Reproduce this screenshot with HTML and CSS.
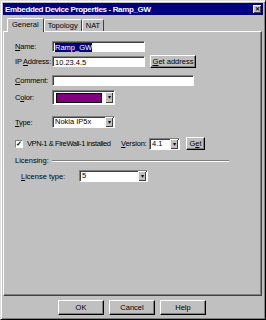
FILE: index.html
```html
<!DOCTYPE html>
<html lang="en">
<head>
  <meta charset="UTF-8" />
  <title>Embedded Device Properties - Ramp_GW</title>
  <link rel="stylesheet" href="styles.css">
</head>
<body>

<div class="window">
  <div class="titlebar">
    <span class="title">Embedded Device Properties - Ramp_GW</span>
    <span class="close">&#x2715;</span>
  </div>

  <div class="tabs">
    <div class="tab active">General</div>
    <div class="tab">Topology</div>
    <div class="tab">NAT</div>
  </div>

  <div class="panel">
    <div class="row row-name">
      <label class="lbl"><u>N</u>ame:</label>
      <div class="field w92"><span class="sel">Ramp_GW</span></div>
    </div>
    <div class="row row-ip">
      <label class="lbl">IP <u>A</u>ddress:</label>
      <div class="field w92">10.23.4.5</div>
      <button class="btn btn-get"><u>G</u>et address</button>
    </div>
    <div class="row row-comment">
      <label class="lbl"><u>C</u>omment:</label>
      <div class="field w141"></div>
    </div>
    <div class="row row-color">
      <label class="lbl">C<u>o</u>lor:</label>
      <div class="combo combo-color">
        <div class="swatch"></div>
        <div class="arrow">&#9662;</div>
      </div>
    </div>
    <div class="row row-type">
      <label class="lbl"><u>T</u>ype:</label>
      <div class="combo w62">
        <span class="val">Nokia IP5x</span>
        <div class="arrow">&#9662;</div>
      </div>
    </div>
    <div class="row row-vpn">
      <div class="check">&#10003;</div>
      <span class="vpn-text">VPN-1 &amp; FireWall-1 installed</span>
      <label class="ver-lbl"><u>V</u>ersion:</label>
      <div class="combo w30">
        <span class="val">4.1</span>
        <div class="arrow">&#9662;</div>
      </div>
      <button class="btn btn-small">G<u>e</u>t</button>
    </div>
    <div class="group">
      <span class="group-lbl">Licensing:</span>
      <div class="group-line"></div>
    </div>
    <div class="row row-license">
      <label class="lbl-lic"><u>L</u>icense type:</label>
      <div class="combo w68">
        <span class="val">5</span>
        <div class="arrow">&#9662;</div>
      </div>
    </div>
  </div>

  <div class="footer">
    <button class="btn btn-foot">OK</button>
    <button class="btn btn-foot">Cancel</button>
    <button class="btn btn-foot">Help</button>
  </div>
</div>

</body>
</html>
```

FILE: styles.css
```css
body {
  margin: 0;
  padding: 0;
  background: #c0c0c0;
  font-family: 'Liberation Sans', Arial, sans-serif;
  font-size: 7.5px;
  color: #000;
}

.window {
  width: 266px;
  height: 320px;
  box-sizing: border-box;
  background: #c0c0c0;
  border: 1px solid;
  border-color: #dfdfdf #000 #000 #dfdfdf;
  box-shadow: inset 1px 1px 0 #fff, inset -1px -1px 0 #808080;
  padding: 2px;
  display: flex;
  flex-direction: column;
}

.titlebar {
  height: 12px;
  background: #000080;
  color: #fff;
  display: flex;
  align-items: center;
  justify-content: space-between;
  padding: 0 2px 0 2px;
}

.title {
  font-weight: 700;
  font-size: 8px;
  letter-spacing: -0.35px;
}

.close {
  width: 8px;
  height: 8px;
  background: #c0c0c0;
  color: #000;
  font-size: 6px;
  line-height: 8px;
  text-align: center;
  font-weight: bold;
  box-shadow: inset 1px 1px 0 #fff, inset -1px -1px 0 #404040;
}

.tabs {
  display: flex;
  margin-top: 3px;
  padding-left: 6px;
  height: 13px;
  align-items: flex-end;
}

.tab {
  height: 11px;
  line-height: 11px;
  padding: 0 3px;
  border: 1px solid;
  border-color: #fff #404040 transparent #fff;
  border-bottom: none;
  border-radius: 2px 2px 0 0;
}

.tab.active {
  height: 13px;
  line-height: 12px;
  margin-left: -2px;
  padding: 0 4px 0 4px;
  position: relative;
  z-index: 1;
  background: #c0c0c0;
  margin-bottom: -1px;
}

.panel {
  height: 265px;
  box-sizing: border-box;
  border: 1px solid;
  border-color: #fff #404040 #404040 #fff;
  box-shadow: inset -1px -1px 0 #808080;
  margin-right: 1px;
  padding: 9px 0 0 11px;
}

.row {
  display: flex;
  align-items: center;
}

.row-ip { margin-top: 3px; }
.row-comment { margin-top: 7px; }
.row-color { margin-top: 4px; }
.row-type { margin-top: 11px; }
.row-vpn { margin-top: 9px; }
.row-license { margin-top: 5px; padding-left: 6px; }

.lbl {
  width: 37px;
  white-space: nowrap;
  letter-spacing: -0.2px;
}

.lbl-lic {
  width: 58px;
}

.field {
  height: 11px;
  line-height: 11px;
  box-sizing: border-box;
  background: #fff;
  border: 1px solid;
  border-color: #808080 #fff #fff #808080;
  box-shadow: inset 1px 1px 0 #404040;
  padding-left: 2px;
  white-space: nowrap;
}

.w92 { width: 93px; }
.w141 { width: 142px; }
.w62 { width: 63px; }
.w30 { width: 31px; }
.w68 { width: 69px; }

.sel {
  background: #000080;
  color: #fff;
}

.combo {
  height: 12px;
  box-sizing: border-box;
  background: #fff;
  border: 1px solid;
  border-color: #808080 #fff #fff #808080;
  box-shadow: inset 1px 1px 0 #404040;
  display: flex;
  align-items: center;
  padding-left: 2px;
}

.combo .val {
  flex: 1;
  line-height: 10px;
}

.combo-color {
  width: 63px;
  height: 15px;
  padding: 2px 0 2px 3px;
}

.swatch {
  flex: 1;
  height: 8px;
  background: #800080;
  border: 1px solid #000;
  margin-right: 3px;
}

.arrow {
  width: 8px;
  height: 100%;
  box-sizing: border-box;
  background: #c0c0c0;
  box-shadow: inset 1px 1px 0 #fff, inset -1px -1px 0 #404040;
  font-size: 6px;
  line-height: 10px;
  text-align: center;
  margin-right: 1px;
}

.combo-color .arrow {
  height: 11px;
  line-height: 11px;
}

.btn {
  font-family: inherit;
  font-size: 7.5px;
  background: #c0c0c0;
  border: 1px solid;
  border-color: #fff #000 #000 #fff;
  box-shadow: inset -1px -1px 0 #808080;
  padding: 0;
  color: #000;
}

.btn-get {
  width: 46px;
  height: 13px;
  margin-left: 5px;
}

.btn-small {
  width: 19px;
  height: 13px;
  margin-left: 6px;
}

.check {
  width: 8px;
  height: 8px;
  box-sizing: border-box;
  background: #fff;
  border: 1px solid;
  border-color: #808080 #fff #fff #808080;
  font-size: 7px;
  line-height: 6px;
  text-align: center;
  font-weight: bold;
}

.vpn-text {
  margin-left: 4px;
  width: 94px;
  white-space: nowrap;
  letter-spacing: -0.4px;
}

.ver-lbl {
  width: 28px;
  letter-spacing: -0.2px;
}

.group {
  display: flex;
  align-items: center;
  margin-top: 6px;
  width: 214px;
}

.group-lbl {
  margin-right: 3px;
}

.group-line {
  flex: 1;
  height: 0;
  border-top: 1px solid #808080;
  border-bottom: 1px solid #fff;
}

.footer {
  display: flex;
  justify-content: center;
  gap: 5px;
  margin-top: 4px;
  padding-right: 2px;
}

.btn-foot {
  width: 46px;
  height: 15px;
}
```
